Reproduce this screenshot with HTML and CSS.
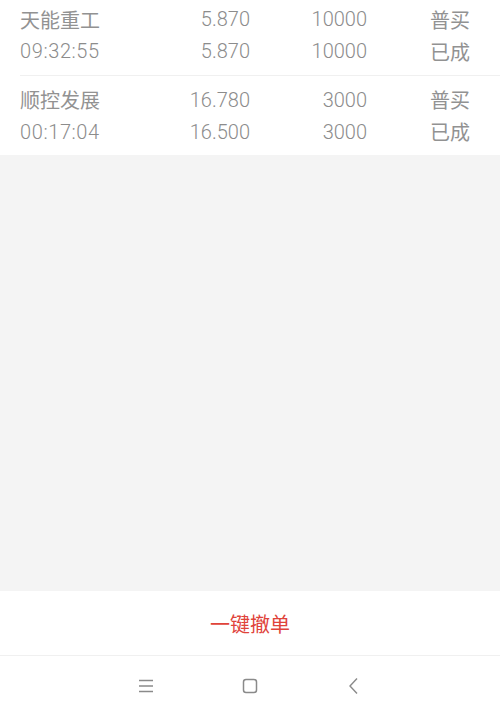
FILE: index.html
```html
<!DOCTYPE html>
<html>
<head>
  <title>Orders</title>
  <link rel="stylesheet" href="styles.css">
</head>
<body>
  <div class="orders">
    <div class="order">
      <div class="line">
        <span class="name cjk">天能重工</span>
        <span class="price">5.870</span>
        <span class="qty">10000</span>
        <span class="state cjk">普买</span>
      </div>
      <div class="line">
        <span class="name time">09:32:55</span>
        <span class="price">5.870</span>
        <span class="qty">10000</span>
        <span class="state cjk">已成</span>
      </div>
    </div>
    <div class="order">
      <div class="line">
        <span class="name cjk">顺控发展</span>
        <span class="price">16.780</span>
        <span class="qty">3000</span>
        <span class="state cjk">普买</span>
      </div>
      <div class="line">
        <span class="name time">00:17:04</span>
        <span class="price">16.500</span>
        <span class="qty">3000</span>
        <span class="state cjk">已成</span>
      </div>
    </div>
  </div>

  <div class="empty"></div>

  <div class="cancel-bar">
    <button class="cancel-btn">一键撤单</button>
  </div>

  <div class="navbar">
    <svg width="20" height="20" viewBox="0 0 20 20">
      <path d="M3 4.5h14M3 10h14M3 15.5h14" stroke="#8a8a8a" stroke-width="1.4" fill="none"/>
    </svg>
    <svg width="20" height="20" viewBox="0 0 20 20">
      <rect x="3.5" y="3.5" width="13" height="13" rx="2.5" stroke="#8a8a8a" stroke-width="1.5" fill="none"/>
    </svg>
    <svg width="20" height="20" viewBox="0 0 20 20">
      <path d="M13 2.5L6 10l7 7.5" stroke="#8a8a8a" stroke-width="1.4" fill="none"/>
    </svg>
  </div>
</body>
</html>
```

FILE: styles.css
```css
html, body {
  margin: 0;
  padding: 0;
  height: 100%;
}
body {
  font-family: Roboto, "Noto Sans CJK SC", sans-serif;
  background-color: #f4f4f4;
  display: flex;
  flex-direction: column;
  overflow: hidden;
}
.orders {
  background-color: #fff;
  margin-top: -5px;
}
.order {
  height: 80px;
  margin-left: 20px;
  padding-right: 30px;
  box-sizing: border-box;
  display: flex;
  flex-direction: column;
  justify-content: center;
  gap: 8px;
}
.order + .order {
  border-top: 1px solid #f0f0f0;
}
.line {
  display: flex;
  height: 24px;
  align-items: center;
  font-size: 20px;
  font-weight: 300;
  color: #8c8c8c;
}
.cjk {
  font-weight: 400;
  color: #929292;
}
.name {
  width: 110px;
}
.time {
  letter-spacing: 0.6px;
}
.price {
  width: 120px;
  text-align: right;
}
.qty {
  width: 117px;
  text-align: right;
}
.state {
  width: 103px;
  text-align: right;
}
.empty {
  flex: 1;
}
.cancel-bar {
  background-color: #fff;
  height: 64px;
  display: flex;
  align-items: center;
  justify-content: center;
  border-bottom: 1px solid #f0f0f0;
}
.cancel-btn {
  background: none;
  border: none;
  font-family: "Noto Sans CJK SC", sans-serif;
  font-size: 20px;
  color: #e0433a;
  padding: 0;
}
.navbar {
  background-color: #fff;
  height: 59px;
  display: flex;
  align-items: center;
  justify-content: center;
  gap: 84px;
}
```
